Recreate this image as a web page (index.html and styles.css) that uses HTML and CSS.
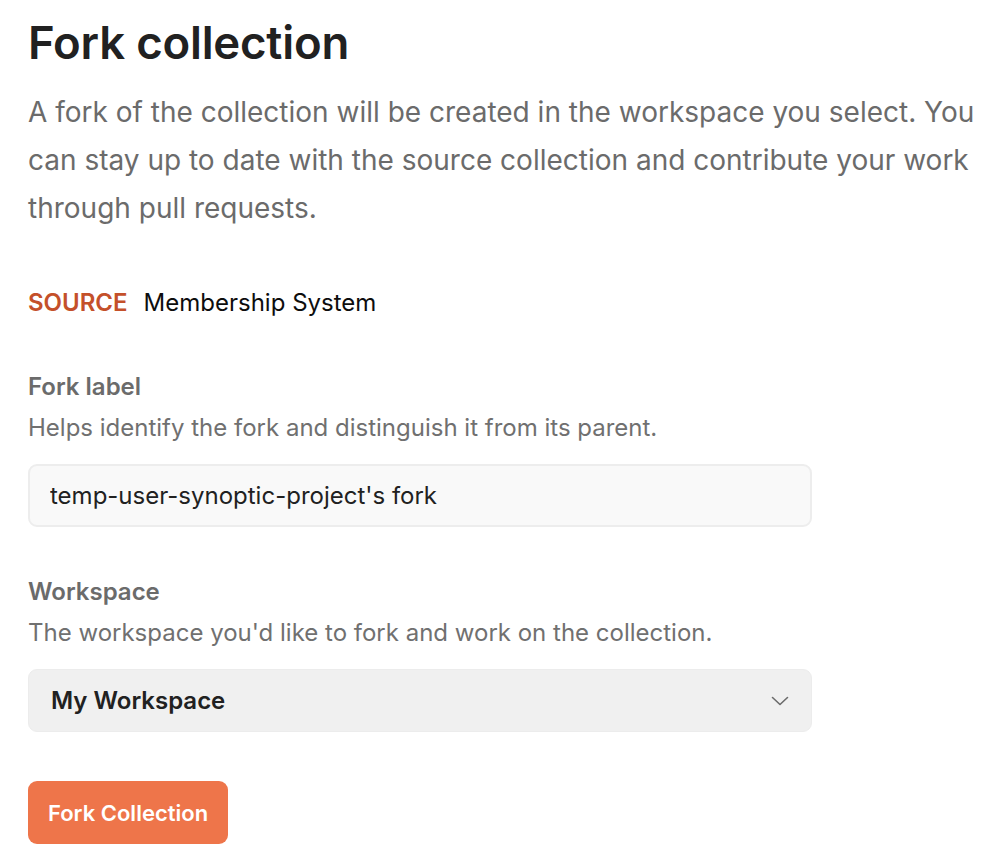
FILE: index.html
```html
<!DOCTYPE html>
<html lang="en">
<head>
<meta charset="utf-8">
<title>Fork collection</title>
<link rel="stylesheet" href="styles.css">
</head>
<body>
<main class="page">
  <h1 class="title">Fork collection</h1>
  <p class="intro">A fork of the collection will be created in the workspace you select. You can stay up to date with the source collection and contribute your work through pull requests.</p>

  <div class="source">
    <span class="source-tag">SOURCE</span>
    <span class="source-name">Membership System</span>
  </div>

  <section class="field field-first">
    <label class="field-label" for="fork-label">Fork label</label>
    <div class="field-desc">Helps identify the fork and distinguish it from its parent.</div>
    <input class="text-input" id="fork-label" type="text" value="temp-user-synoptic-project's fork">
  </section>

  <section class="field">
    <div class="field-label">Workspace</div>
    <div class="field-desc">The workspace you'd like to fork and work on the collection.</div>
    <div class="select">
      <span class="select-value">My Workspace</span>
      <svg class="chevron" width="18" height="10" viewBox="0 0 18 10" aria-hidden="true">
        <path d="M1.5 1.5 L9 8.5 L16.5 1.5" fill="none" stroke="#6b6b6b" stroke-width="1.6" stroke-linecap="round" stroke-linejoin="round"/>
      </svg>
    </div>
  </section>

  <button class="primary-btn" type="button">Fork Collection</button>
</main>
</body>
</html>
```

FILE: styles.css
```css
html, body {
  margin: 0;
  padding: 0;
  background: #ffffff;
}

body {
  font-family: Inter, "Noto Sans", "Liberation Sans", sans-serif;
  color: #212121;
}

.page {
  padding: 16px 10px 0 28px;
  display: flex;
  flex-direction: column;
  align-items: flex-start;
}

.title {
  margin: 0;
  font-size: 45.5px;
  line-height: 54px;
  font-weight: 600;
  color: #212121;
  letter-spacing: -0.2px;
}

.intro {
  margin: 18px 0 0;
  font-size: 28px;
  line-height: 48px;
  color: #6b6b6b;
  font-weight: 400;
}

.source {
  margin-top: 55px;
  display: flex;
  align-items: baseline;
  gap: 16px;
  font-size: 24px;
  line-height: 32px;
}

.source-tag {
  color: #c4502a;
  font-weight: 600;
}

.source-name {
  color: #0d0d0d;
}

.field {
  display: flex;
  flex-direction: column;
  width: 784px;
  margin-top: 49px;
}

.field-first {
  margin-top: 52px;
}

.field-label {
  font-size: 24px;
  line-height: 32px;
  font-weight: 600;
  color: #6b6b6b;
}

.field-desc {
  margin-top: 9px;
  font-size: 24px;
  line-height: 32px;
  color: #707070;
}

.text-input {
  margin-top: 20px;
  box-sizing: border-box;
  width: 784px;
  height: 63px;
  padding: 0 20px;
  border: 2px solid #ededed;
  border-radius: 9px;
  background: #f9f9f9;
  font-family: inherit;
  font-size: 24px;
  color: #212121;
  outline: none;
}

.select {
  margin-top: 20px;
  box-sizing: border-box;
  width: 784px;
  height: 63px;
  padding: 0 22px 0 22px;
  border-radius: 9px;
  background: #f0f0f0;
  border: 1px solid #ececec;
  display: flex;
  align-items: center;
  justify-content: space-between;
}

.select-value {
  font-size: 24px;
  font-weight: 600;
  color: #212121;
}

.chevron {
  display: block;
}

.primary-btn {
  margin-top: 49px;
  height: 63px;
  padding: 0 20px;
  border: none;
  border-radius: 9px;
  background: #ee754a;
  color: #ffffff;
  font-family: inherit;
  font-size: 22px;
  font-weight: 600;
  cursor: pointer;
}
```
